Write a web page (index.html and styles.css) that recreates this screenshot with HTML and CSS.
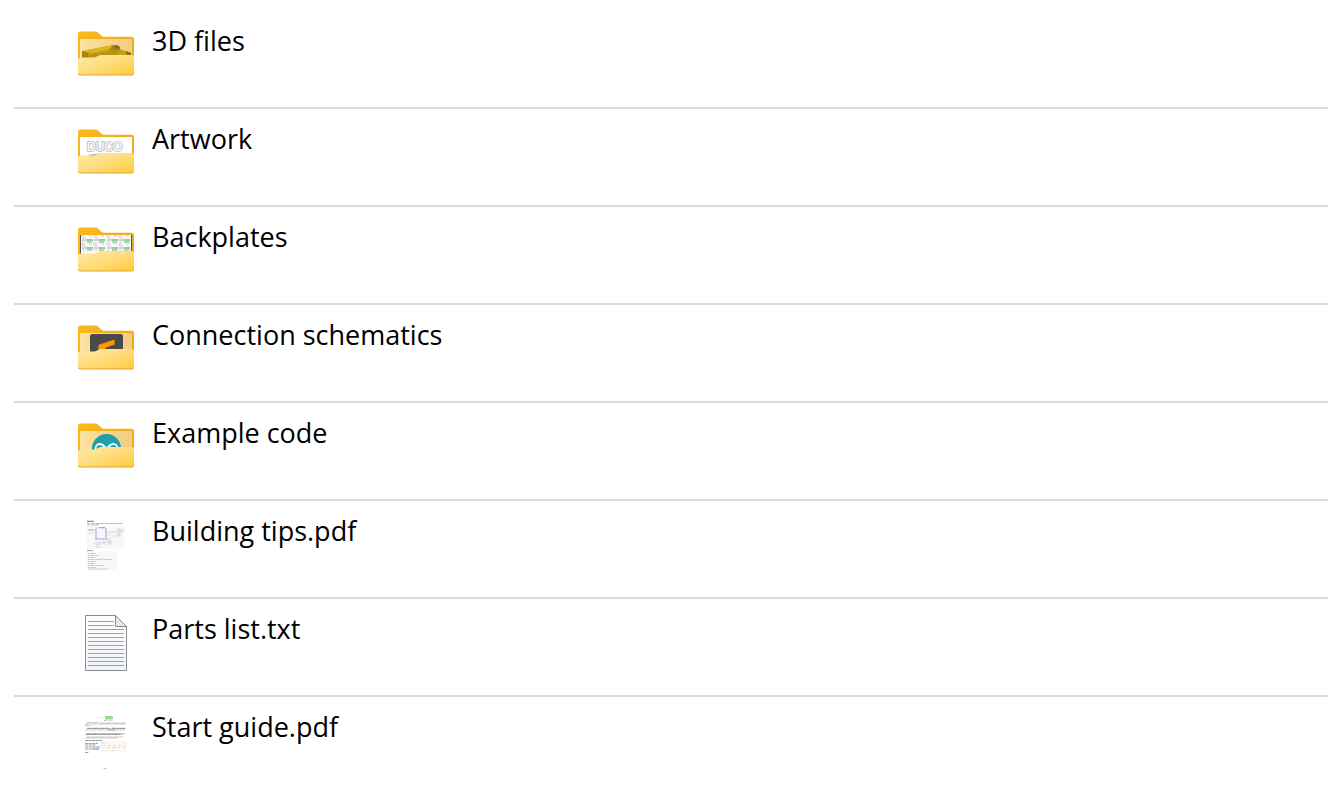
FILE: index.html
```html
<!DOCTYPE html>
<html lang="en">
<head>
<meta charset="utf-8">
<meta name="viewport" content="width=device-width, initial-scale=1">
<title>Files</title>
<link rel="stylesheet" href="styles.css">
</head>
<body>
<svg class="defs" aria-hidden="true">
  <defs>
    <linearGradient id="backFill" x1="0" y1="0" x2="1" y2="1"><stop offset="0" stop-color="#fcb91c"/><stop offset="1" stop-color="#e8a326"/></linearGradient>
    <linearGradient id="frontFill" x1="0" y1="0" x2="1" y2="1"><stop offset="0" stop-color="#ffe9a8"/><stop offset=".45" stop-color="#ffde82"/><stop offset="1" stop-color="#ffca3d"/></linearGradient>
    <linearGradient id="innerFill" x1="0" y1="0" x2="1" y2="0"><stop offset="0" stop-color="#fbe2a0"/><stop offset="1" stop-color="#f2cb80"/></linearGradient>
    <linearGradient id="pageFill" x1="0" y1="0" x2="0" y2="1"><stop offset="0" stop-color="#fdfdfd"/><stop offset="1" stop-color="#eff2f8"/></linearGradient>
    <symbol id="folder-back" viewBox="0 0 56 56">
      <path fill="url(#backFill)" d="M0 7q0-2.500 2.500-2.500H17.500q1.500 0 2.500 1l3.500 3.200q1 1 2.500 1H53.500q2.500 0 2.500 2.500V40H0z"/>
      <path fill="url(#innerFill)" d="M2 12H54V40H2z"/>
    </symbol>
    <symbol id="folder-front" viewBox="0 0 56 56">
      <path fill="#e3a32c" d="M0 33H56V46q0 2.500-2.500 2.500h-51Q0 48.500 0 46z"/>
      <path fill="url(#frontFill)" d="M0 33q0-2.500 2.500-2.500H15.500q2 0 3.500-1 2-1.500 4-1.500H53.500q2.500 0 2.500 2.500V45q0 2.500-2.500 2.500h-51Q0 47.500 0 45z"/>
    </symbol>
    <g id="plate">
      <path d="M0 1h4M1 3h4M8 1h3" stroke="#c4c4c8" stroke-width=".8" fill="none"/>
      <path d="M6 4h6v2.500H6z" fill="#7ddc88"/>
      <path d="M1 5h5M6 7.200h5" stroke="#9c9ca4" fill="none" stroke-width=".8"/>
      <path d="M1 7l3 .5" stroke="#dcb4be" stroke-width=".6"/>
    </g>
  </defs>
</svg>
<ul class="files">
  <li class="file">
    <svg class="icon" viewBox="0 0 56 56" aria-hidden="true">
      <use href="#folder-back"/>
      <path fill="#c4a018" d="M4 24L35 18l6 1 1 3 11 4v4l-49 3z"/>
      <path fill="#dab520" d="M4 24l32-6 1 2-3 2-20 4z"/>
      <path fill="#a5830e" d="M4 24l6 2v6H4zM35 18l6 1 1 4-6 1-5-1z"/>
      <path fill="#b8930f" d="M10 28l24-4 4-2 3 2-2 4-22 3-7 1z"/>
      <path fill="#8e6c0d" d="M36 18l5 1 1 3-5-1zM48 24l5 2v3l-5-2z"/>
      <use href="#folder-front"/>
    </svg>
    <span class="name">3D files</span>
  </li>
  <li class="file">
    <svg class="icon" viewBox="0 0 56 56" aria-hidden="true">
      <use href="#folder-back"/>
      <path fill="#fff" d="M2 12H54V32H2z"/>
      <text class="logo" x="9" y="26">DUCO</text>
      <path fill="#7fc68a" d="M11 30q3-1 12-1.500V31H11z"/>
      <use href="#folder-front"/>
    </svg>
    <span class="name">Artwork</span>
  </li>
  <li class="file">
    <svg class="icon" viewBox="0 0 56 56" aria-hidden="true">
      <use href="#folder-back"/>
      <path fill="#f8f8f8" d="M2 12H54V32H2z"/>
      <use href="#plate" x="3" y="12"/><use href="#plate" x="15" y="12"/><use href="#plate" x="28" y="12"/><use href="#plate" x="40" y="12"/>
      <use href="#plate" x="3" y="20"/><use href="#plate" x="15" y="20"/><use href="#plate" x="28" y="20"/><use href="#plate" x="40" y="20"/>
      <path fill="#55524b" d="M2 12h1v19H2zM53 12h1v19h-1z"/>
      <use href="#folder-front"/>
    </svg>
    <span class="name">Backplates</span>
  </li>
  <li class="file">
    <svg class="icon" viewBox="0 0 56 56" aria-hidden="true">
      <use href="#folder-back"/>
      <rect x="12" y="13" width="33" height="30" rx="2.500" fill="#4a4a4a"/>
      <path fill="#ff9800" d="M20.500 25q0-1 1-1.500L36.500 18.500V23.500L27 27l3 4h-9.500z"/>
      <use href="#folder-front"/>
    </svg>
    <span class="name">Connection schematics</span>
  </li>
  <li class="file">
    <svg class="icon" viewBox="0 0 56 56" aria-hidden="true">
      <use href="#folder-back"/>
      <circle cx="28.500" cy="29.500" r="14.500" fill="#1fa0a6"/>
      <path fill="none" stroke="#fff" stroke-width="1.800" d="M28.500 30c-3-4-5-5-7-5s-4 2-4 5 2 5 4 5 4-1 7-5 5-5 7-5 4 2 4 5-2 5-4 5-4-1-7-5"/>
      <use href="#folder-front"/>
    </svg>
    <span class="name">Example code</span>
  </li>
  <li class="file">
    <svg class="icon" viewBox="0 0 56 56" aria-hidden="true">
      <path fill="#f8f8f9" d="M9 9H46V32H9zM9 34H39V53H9z"/>
      <path stroke="#888" stroke-width="1.200" stroke-dasharray="3 .3" d="M9 4.300h7"/>
      <path stroke="#bbb" stroke-dasharray="3 .6 5 .5" d="M9 6.600h36M9 8h10"/>
      <path stroke="#aaa" d="M19 7.600h2M10 13h5M21 10.500h6M9 33.500h6"/>
      <path fill="none" stroke="#c6c0f2" stroke-width="2" stroke-dasharray="1.500 .4" d="M18 12v10h10V12"/>
      <path fill="none" stroke="#c0bae6" stroke-width=".7" d="M15 13h3M17 11h11v11M40 12h2v7h-2zM31 24h2v3h-2zM16 26h7l2-1h5M18 28l5-1"/>
      <path fill="none" stroke="#cfe0cc" stroke-width=".6" d="M29 15h10M29 18h10M29 16l10-2M30 22l9-3M25 28h5"/>
      <path stroke="#bcbcc4" stroke-width=".7" stroke-dasharray="2 .6" d="M11 16h4M42 13h5M43 15h3M18 30h5M29 23h3M25 26h3"/>
      <path stroke="#bbb" stroke-width=".8" stroke-dasharray="2 .4 4 .5" d="M10 36.500h8M10 38.500h11M10 40.500h7M10 42.500h24M10 44.500h8M10 46.500h7M10 48.500h16M10 50.500h8M10 52h21"/>
    </svg>
    <span class="name">Building tips.pdf</span>
  </li>
  <li class="file">
    <svg class="icon" viewBox="0 0 56 56" aria-hidden="true">
      <path fill="url(#pageFill)" stroke="#8a8c8e" d="M7.500 .5H37.500L48.500 11.500V55.500H7.500z"/>
      <path fill="#e6e7e9" stroke="#8a8c8e" d="M37.500 .5V11.500H48.500z"/>
      <path stroke="#a0a2a5" d="M10 6.500H36M10 10.500H36M10 14.500H46M10 18.500H46M10 22.500H46M10 26.500H46M10 30.500H46M10 34.500H46M10 38.500H46M10 42.500H46M10 46.500H46M10 50.500H46"/>
    </svg>
    <span class="name">Parts list.txt</span>
  </li>
  <li class="file">
    <svg class="icon" viewBox="0 0 56 56" aria-hidden="true">
      <rect x="27" y="3" width="8" height="3.500" rx="1" fill="#8de08b"/>
      <path stroke="#d3e8d1" stroke-width=".8" stroke-dasharray="2 .5" d="M19 4.500h8"/>
      <path stroke="#e4a493" d="M26 7.500h2"/>
      <path stroke="#ccc" stroke-width=".7" d="M29 7.500h6"/>
      <path stroke="#aaa" stroke-width=".7" stroke-dasharray="4 .5 2 .4" d="M9 9.500h12M22 10h26M7 11h41M7 12.500h6M9 15.500h39M7 17h40M9 20.500h38M7 21.500h38M9 24h36M7 25h32"/>
      <path stroke="#777" stroke-width=".8" stroke-dasharray="3 .5" d="M9 15.300h22M34 15.300h13M8 21.300h35M7 27.500h17"/>
      <path stroke="#888" stroke-width=".8" stroke-dasharray="3 .6" d="M7 30.500h13M7 32h11M7 34h7M7 36h14M7 39.500h4"/>
      <path stroke="#84a5e8" d="M30 17h7M14 34h8M15 36h6"/>
      <path fill="#fdf9f4" stroke="#eee5d8" stroke-width=".5" d="M23 29H48V38H23z"/>
      <path stroke="#d9cfc5" stroke-width=".7" stroke-dasharray="3 2" d="M24 30h6M25 32.500h22M29 34.500h18M34 37.500h3"/>
      <path stroke="#f0dbc0" stroke-width=".6" d="M24 55h5"/>
      <path stroke="#aaa" stroke-width=".7" d="M25.500 55.600h3"/>
    </svg>
    <span class="name">Start guide.pdf</span>
  </li>
</ul>
</body>
</html>
```

FILE: styles.css
```css
body {
  margin: 0;
  background: #fff;
  color: #000;
  font-family: "Open Sans", "Noto Sans", sans-serif;
}

.defs {
  position: absolute;
  width: 0;
  height: 0;
}

.files {
  list-style: none;
  margin: 0 0 0 14px;
  padding: 11px 0 0;
}

.file {
  display: flex;
  align-items: flex-start;
  gap: 18px;
  padding: 16px 16px 24px 64px;
  border-bottom: 2px solid #dadada;
}

.file:last-child {
  border-bottom: 0;
}

.icon {
  flex: none;
  width: 56px;
  height: 56px;
}

.name {
  font-size: 27px;
  line-height: 28px;
}

.logo {
  font-family: "Liberation Sans", sans-serif;
  font-size: 12px;
  fill: #fff;
  stroke: #c4c4c4;
  stroke-width: 2;
  paint-order: stroke;
}
```
